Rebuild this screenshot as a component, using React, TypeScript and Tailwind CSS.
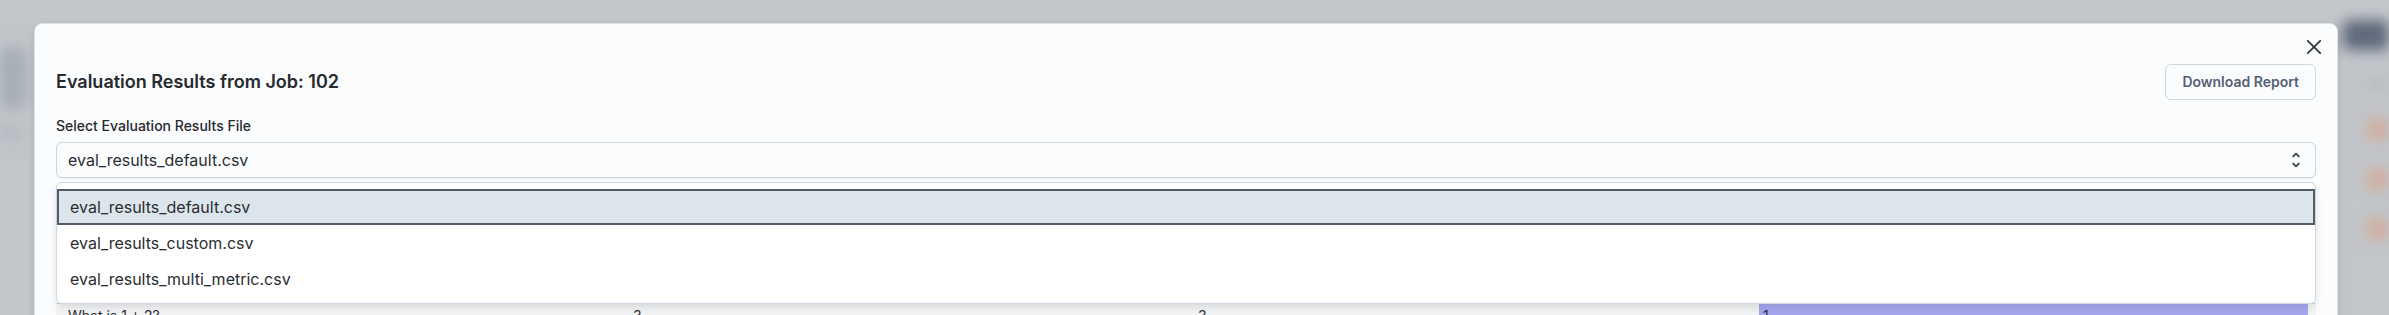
import React from "react"

const files = ["eval_results_default.csv", "eval_results_custom.csv", "eval_results_multi_metric.csv"]

function CloseIcon() {
    return (
        <svg width="24" height="24" viewBox="0 0 24 24" fill="none" stroke="currentColor" strokeWidth="1.8" strokeLinecap="round">
            <line x1="5.8" y1="5.8" x2="18.2" y2="18.2" />
            <line x1="18.2" y1="5.8" x2="5.8" y2="18.2" />
        </svg>
    )
}

function UnfoldIcon() {
    return (
        <svg width="20" height="20" viewBox="0 0 24 24" fill="currentColor">
            <path d="M12 5.83 15.17 9l1.41-1.41L12 3 7.41 7.59 8.83 9zm0 12.34L8.83 15l-1.41 1.41L12 21l4.59-4.59L15.17 15z" />
        </svg>
    )
}

function Backdrop() {
    // blurred page behind the modal
    return (
        <div className="absolute inset-0 flex flex-col blur-[7px]">
            <div className="h-[18px] bg-[#c5c7cb]" />
            <div className="flex flex-1">
                <div className="w-[40px] flex flex-col">
                    <div className="mt-[30px] h-[60px] w-[26px] rounded-md bg-[#a6adb6]" />
                    <div className="mt-[18px] h-[14px] w-[22px] rounded bg-[#b4b9c0]" />
                </div>
                <div className="flex-1" />
                <div className="w-[56px] flex flex-col items-end">
                    <div className="mt-[2px] h-[30px] w-[46px] rounded-md bg-[#5e697a]" />
                    <div className="mt-[28px] h-[10px] w-[22px] rounded bg-[#b6bac0]" />
                    <div className="mt-[30px] flex flex-col gap-[28px]">
                        <div className="h-[22px] w-[22px] rounded-full bg-[#d4ab98]" />
                        <div className="h-[22px] w-[22px] rounded-full bg-[#d4ab98]" />
                        <div className="h-[22px] w-[22px] rounded-full bg-[#d4ab98]" />
                    </div>
                </div>
            </div>
        </div>
    )
}

export default function App() {
    return (
        <div
            className="relative w-[2389px] h-[315px] overflow-hidden bg-[#c2c5c9]"
            style={{ fontFamily: "Inter, 'Noto Sans', sans-serif" }}
        >
            <Backdrop />

            <div className="relative pt-[23px] pl-[34px] w-[2338px]">
                <div className="relative h-[320px] rounded-lg border border-[#dbe1e7] bg-[#fbfcfe] px-[21px] pt-[40px] shadow-[0_2px_8px_-2px_rgba(21,21,21,0.08),0_6px_12px_-2px_rgba(21,21,21,0.08)]">
                    <button className="absolute top-[7px] right-[7px] flex h-8 w-8 items-center justify-center rounded-md text-[#32383e]">
                        <CloseIcon />
                    </button>

                    <div className="flex items-center justify-between">
                        <h2 className="text-[18px] leading-6 font-semibold text-[#26292d]">Evaluation Results from Job: 102</h2>
                        <button className="h-9 rounded-md border border-[#cdd7e1] px-4 text-sm font-semibold text-[#556176]">
                            Download Report
                        </button>
                    </div>

                    <div className="mt-[16px] text-sm leading-5 font-medium text-[#26292d]">Select Evaluation Results File</div>

                    <div className="relative mt-[6px]">
                        <div className="flex h-9 items-center justify-between rounded-md border border-[#cdd7e1] bg-[#fbfcfe] pl-[11px] pr-[9px] text-base text-[#2a2e33] shadow-[0_1px_2px_0_rgba(21,21,21,0.06)]">
                            <span>{files[0]}</span>
                            <span className="text-[#32383e]">
                                <UnfoldIcon />
                            </span>
                        </div>

                        <ul className="absolute left-0 right-0 top-[calc(100%+4px)] z-10 rounded-md border border-[#cdd7e1] bg-white py-[6px] shadow-[0_2px_8px_-2px_rgba(21,21,21,0.08),0_6px_12px_-2px_rgba(21,21,21,0.08)]">
                            {files.map((f, i) => (
                                <li
                                    key={f}
                                    className={
                                        i === 0
                                            ? "flex h-9 items-center border-2 border-[#555e68] bg-[#dde5ec] pl-[11px] text-base text-[#2a2e33]"
                                            : "flex h-9 items-center border-2 border-transparent pl-[11px] text-base text-[#2a2e33]"
                                    }
                                >
                                    {f}
                                </li>
                            ))}
                        </ul>
                    </div>

                    <div className="mt-[16px]">
                        {/* table header sits under the open listbox */}
                        <div className="h-[109px]" />
                        <div className="grid grid-cols-4 border-t border-[#d3d8dd] bg-[#f3f4f6] text-sm leading-5 text-[#2b2f33]">
                            <div className="px-3 pt-[2px]">What is 1 + 2?</div>
                            <div className="px-3 pt-[2px]">3</div>
                            <div className="px-3 pt-[2px]">3</div>
                            <div className="px-2">
                                <div className="h-10 bg-[#a7a7f1] pl-1 pt-[2px]">1</div>
                            </div>
                        </div>
                    </div>
                </div>
            </div>
        </div>
    )
}
